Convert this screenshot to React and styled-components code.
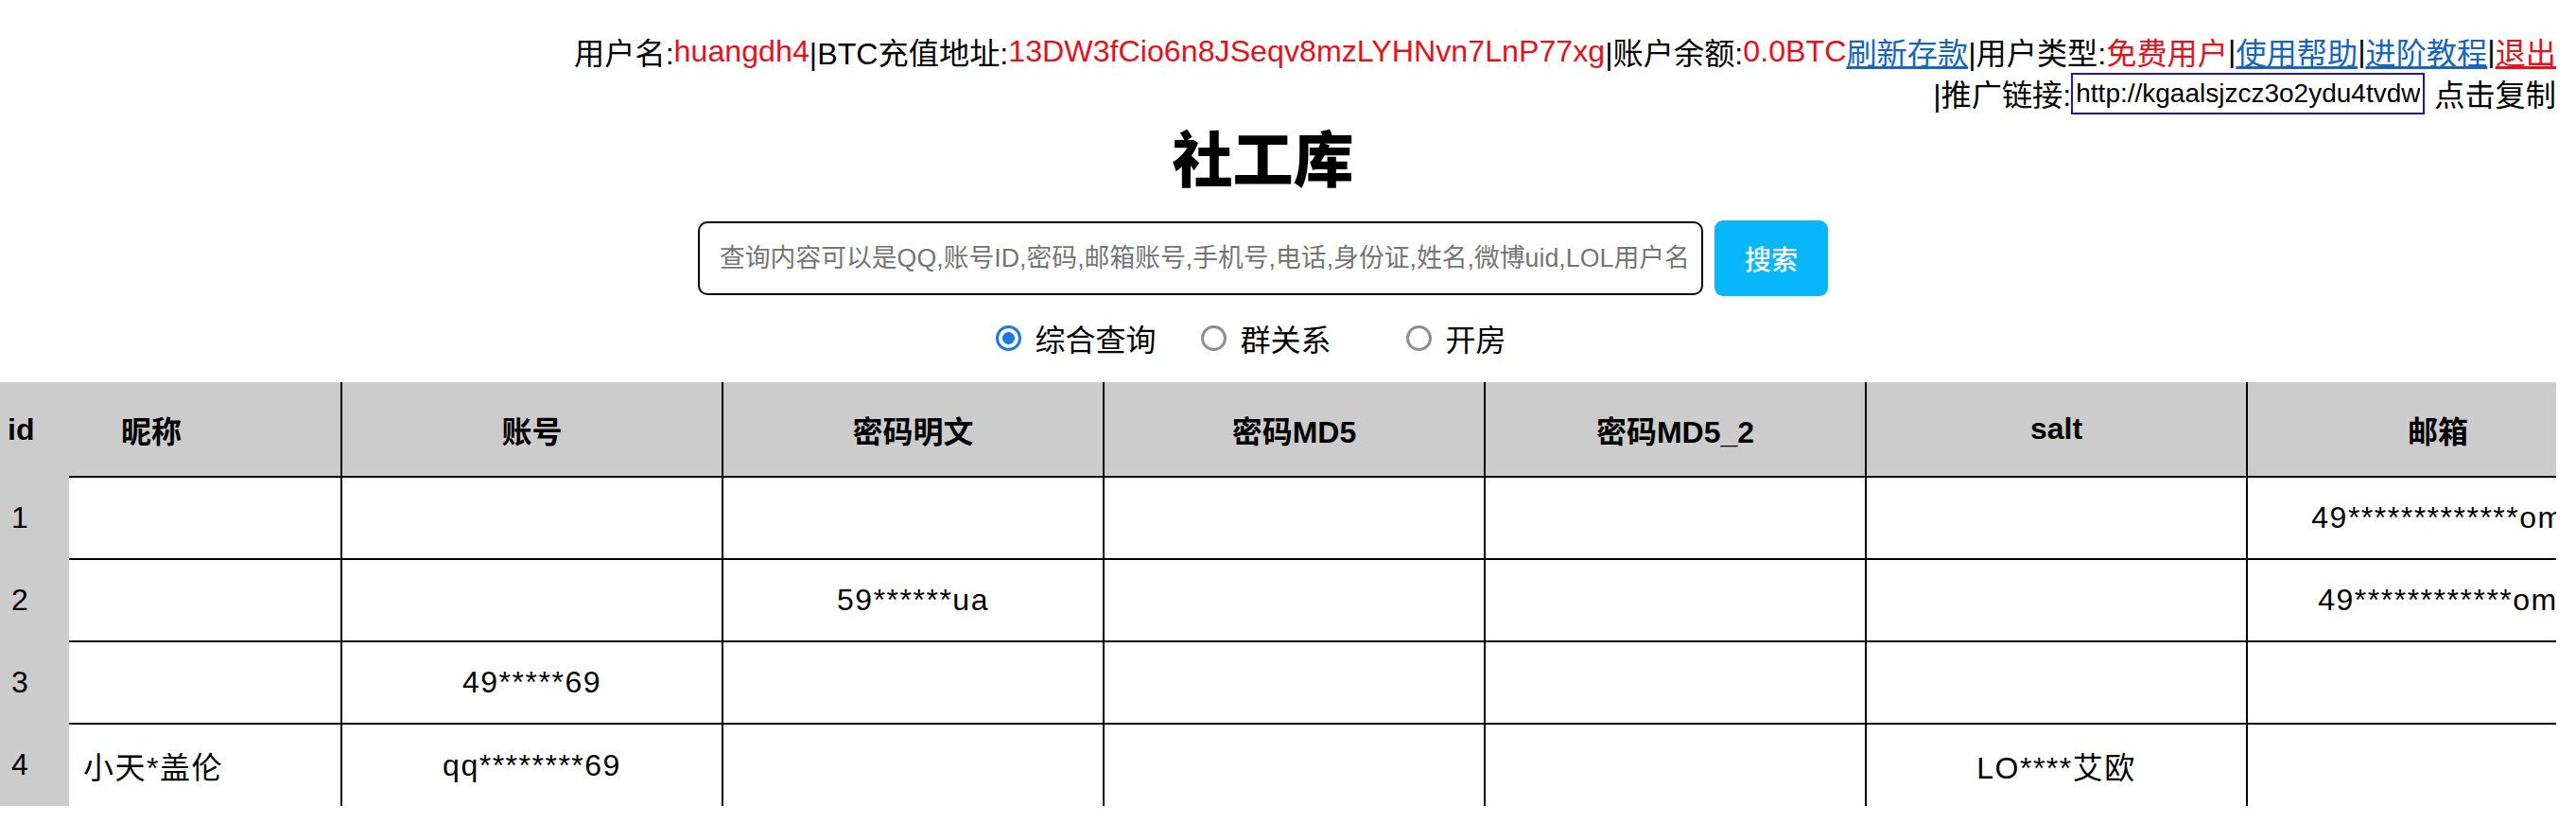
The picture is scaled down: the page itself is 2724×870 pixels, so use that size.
import React from "react";
import styled, { createGlobalStyle } from "styled-components";

const GlobalStyle = createGlobalStyle`
  html, body {
    margin: 0;
    padding: 0;
    background: #fff;
  }
  body {
    font-family: "Liberation Sans", "Noto Sans CJK SC", sans-serif;
    color: #000;
  }
`;

const Page = styled.div`
  width: calc(100% - 21px);
  overflow: hidden;
`;

// top right account bar
const UserBar = styled.div`
  padding-top: 32px;
  font-size: 32.2px;
`;

const BarRow = styled.div`
  display: flex;
  justify-content: flex-end;
  align-items: center;
  height: 44px;
  white-space: nowrap;
`;

const Value = styled.span`
  color: #e8101a;
`;

const BarLink = styled.a`
  color: ${(props) => (props.$danger ? "#e8101a" : "#1466c0")};
  text-decoration: underline;
  cursor: pointer;
`;

const RefInput = styled.input`
  box-sizing: border-box;
  width: 374px;
  height: 44px;
  margin: 2px 0 0 0;
  padding: 0 3px;
  border: 2px solid #2414a8;
  font-family: "Liberation Sans", sans-serif;
  font-size: 28px;
  color: #000;
  background: #fff;
  outline: none;
`;

const CopyText = styled.span`
  margin-left: 10px;
  cursor: pointer;
`;

// centered search block
const Center = styled.div`
  padding-right: 32px;
`;

const Title = styled.h1`
  margin: 12px 0 0 0;
  text-align: center;
  font-size: 64px;
  line-height: 76px;
  font-weight: 900;
`;

const SearchRow = styled.div`
  display: flex;
  justify-content: center;
  align-items: center;
  gap: 12px;
  margin-top: 25px;
`;

const SearchInput = styled.input`
  box-sizing: border-box;
  width: 1063px;
  height: 78px;
  padding: 0 6px 0 21px;
  border: 2px solid #000;
  border-radius: 10px;
  font-family: "Liberation Sans", "Noto Sans CJK SC", sans-serif;
  font-size: 26.8px;
  outline: none;

  &::placeholder {
    color: #757575;
  }
`;

const SearchButton = styled.button`
  width: 120px;
  height: 80px;
  border: none;
  border-radius: 9px;
  background: #08b6fc;
  color: #fff;
  font-family: "Liberation Sans", "Noto Sans CJK SC", sans-serif;
  font-size: 28px;
  font-weight: 500;
  cursor: pointer;
`;

const RadioRow = styled.div`
  display: flex;
  justify-content: center;
  align-items: center;
  height: 40px;
  margin-top: 24px;
  font-size: 32px;
`;

const Option = styled.label`
  display: flex;
  align-items: center;
  gap: 14px;
  width: ${(props) => props.$w};
  margin-right: ${(props) => props.$mr || "0"};
  cursor: pointer;
`;

const Radio = styled.input`
  appearance: none;
  box-sizing: border-box;
  width: 27px;
  height: 27px;
  margin: 0;
  border-radius: 50%;
  border: 3px solid #8f8f8f;
  background: #fff;

  &:checked {
    border-color: #1b78e6;
    background: radial-gradient(circle, #1b78e6 0 6px, #fff 6.8px);
  }
`;

// result table
const TableWrap = styled.div`
  margin-top: 27px;
  overflow: hidden;
`;

const Table = styled.table`
  border-collapse: collapse;
  table-layout: fixed;
  width: 2779px;
  font-size: 32px;
`;

const Col = styled.col`
  width: ${(props) => props.$w}px;
`;

const Th = styled.th`
  height: 99px;
  padding: 0;
  background: #ccc;
  font-weight: bold;
  text-align: ${(props) => props.$align};
  padding-left: ${(props) => props.$pl}px;
  border-right: ${(props) => (props.$plain || props.$last ? "none" : "2px solid #000")};
  border-bottom: ${(props) => (props.$plain ? "none" : "2px solid #000")};
  white-space: nowrap;
  overflow: hidden;
`;

const Tr = styled.tr`
  height: 87px;
`;

const Td = styled.td`
  padding: 0;
  letter-spacing: ${(props) => (props.$plain ? "0" : "1.5px")};
  text-align: ${(props) => props.$align};
  padding-left: ${(props) => props.$pl}px;
  background: ${(props) => (props.$plain ? "#ccc" : "#fff")};
  border-right: ${(props) => (props.$plain || props.$last ? "none" : "2px solid #000")};
  border-bottom: ${(props) => (props.$plain || props.$lastRow ? "none" : "2px solid #000")};
  white-space: nowrap;
  overflow: hidden;
`;

const columns = [
  { key: "id", label: "id", w: 73, align: "left", thPl: 8, tdPl: 12 },
  { key: "nick", label: "昵称", w: 288, align: "left", thPl: 55, tdPl: 15 },
  { key: "account", label: "账号", w: 403, align: "center" },
  { key: "pwd", label: "密码明文", w: 403, align: "center" },
  { key: "md5", label: "密码MD5", w: 403, align: "center" },
  { key: "md5_2", label: "密码MD5_2", w: 403, align: "center" },
  { key: "salt", label: "salt", w: 403, align: "center" },
  { key: "email", label: "邮箱", w: 403, align: "center" },
];

const rows = [
  { id: "1", email: "49*************om" },
  { id: "2", pwd: "59******ua", email: "49************om" },
  { id: "3", account: "49*****69" },
  { id: "4", nick: "小天*盖伦", account: "qq********69", salt: "LO****艾欧" },
];

export default function App() {
  return (
    <>
      <GlobalStyle />
      <Page>
        <UserBar>
          <BarRow>
            用户名:<Value>huangdh4</Value>|BTC充值地址:
            <Value>13DW3fCio6n8JSeqv8mzLYHNvn7LnP77xg</Value>|账户余额:
            <Value>0.0BTC</Value>
            <BarLink>刷新存款</BarLink>|用户类型:<Value>免费用户</Value>|
            <BarLink>使用帮助</BarLink>|<BarLink>进阶教程</BarLink>|
            <BarLink $danger>退出</BarLink>
          </BarRow>
          <BarRow>
            |推广链接:
            <RefInput readOnly value="http://kgaalsjzcz3o2ydu4tvdw.onion/?u=huangdh4" />
            <CopyText>点击复制</CopyText>
          </BarRow>
        </UserBar>

        <Center>
          <Title>社工库</Title>
          <SearchRow>
            <SearchInput placeholder="查询内容可以是QQ,账号ID,密码,邮箱账号,手机号,电话,身份证,姓名,微博uid,LOL用户名" />
            <SearchButton>搜索</SearchButton>
          </SearchRow>
          <RadioRow>
            <Option $w="217px">
              <Radio type="radio" name="mode" defaultChecked />
              综合查询
            </Option>
            <Option $w="217px">
              <Radio type="radio" name="mode" />
              群关系
            </Option>
            <Option $w="auto" $mr="25px">
              <Radio type="radio" name="mode" />
              开房
            </Option>
          </RadioRow>
        </Center>

        <TableWrap>
          <Table>
            <colgroup>
              {columns.map((c) => (
                <Col key={c.key} $w={c.w} />
              ))}
            </colgroup>
            <thead>
              <tr>
                {columns.map((c, i) => (
                  <Th
                    key={c.key}
                    $align={c.align}
                    $pl={c.thPl || 0}
                    $plain={i === 0}
                    $last={i === columns.length - 1}
                  >
                    {c.label}
                  </Th>
                ))}
              </tr>
            </thead>
            <tbody>
              {rows.map((r, ri) => (
                <Tr key={r.id}>
                  {columns.map((c, i) => (
                    <Td
                      key={c.key}
                      $align={c.align}
                      $pl={c.tdPl || 0}
                      $plain={i === 0}
                      $last={i === columns.length - 1}
                      $lastRow={ri === rows.length - 1}
                    >
                      {r[c.key] || ""}
                    </Td>
                  ))}
                </Tr>
              ))}
            </tbody>
          </Table>
        </TableWrap>
      </Page>
    </>
  );
}
